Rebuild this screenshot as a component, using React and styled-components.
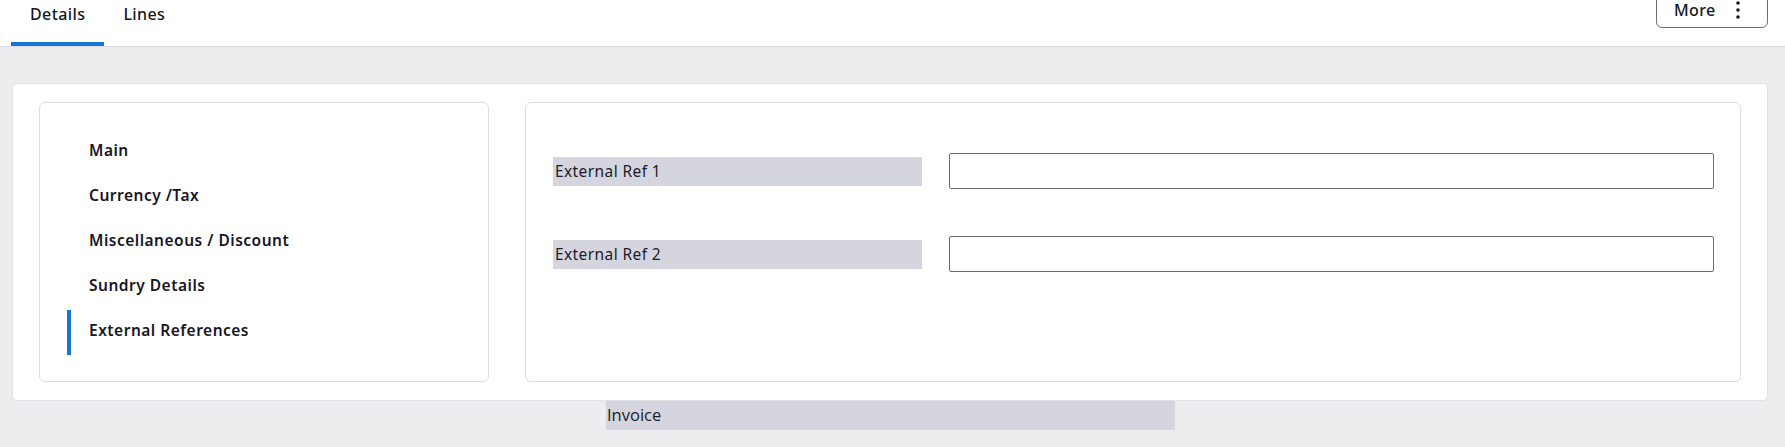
import React from "react";
import styled, { createGlobalStyle } from "styled-components";

const GlobalStyle = createGlobalStyle`
  html, body {
    margin: 0;
    padding: 0;
    background: #ededf0;
    font-family: "Noto Sans", "Open Sans", sans-serif;
    color: #1c1c28;
    overflow: hidden;
  }
`;

const Page = styled.div`
  width: 1785px;
  height: 447px;
  background: #ededf0;
`;

const TopBar = styled.div`
  display: flex;
  justify-content: space-between;
  align-items: flex-start;
  height: 46px;
  padding-left: 11px;
  padding-right: 17px;
  background: #ffffff;
  border-bottom: 1px solid #d8d8de;
`;

const Tabs = styled.div`
  display: flex;
`;

const Tab = styled.div`
  box-sizing: border-box;
  height: 46px;
  padding: 3px 19px 0;
  font-size: 16px;
  font-weight: 500;
  letter-spacing: 0.4px;
  line-height: 22px;
  color: #16161f;
  border-bottom: 4px solid ${(p) => (p.active ? "#1a74d2" : "transparent")};
`;

const MoreButton = styled.button`
  display: flex;
  align-items: center;
  gap: 20px;
  box-sizing: border-box;
  height: 36px;
  width: 112px;
  margin-top: -8px;
  padding: 0 0 0 17px;
  background: #ffffff;
  border: 1px solid #6b6b7b;
  border-radius: 6px;
  font-family: "Noto Sans", sans-serif;
  font-size: 16px;
  font-weight: 500;
  letter-spacing: 0.4px;
  color: #16161f;
`;

const Body = styled.div`
  padding: 36px 17px 0 12px;
`;

const Card = styled.div`
  display: flex;
  gap: 36px;
  padding: 18px 26px 18px 26px;
  background: #ffffff;
  border: 1px solid #e2e2e6;
  border-radius: 5px;
`;

const Panel = styled.div`
  box-sizing: border-box;
  height: 280px;
  border: 1px solid #dcdce1;
  border-radius: 6px;
  background: #ffffff;
`;

const NavPanel = styled(Panel)`
  width: 450px;
  flex-shrink: 0;
  padding: 27px 0 0 27px;
`;

const FormPanel = styled(Panel)`
  flex: 1;
  padding: 50px 26px 0 27px;
  display: flex;
  flex-direction: column;
  gap: 47px;
`;

const NavItem = styled.div`
  box-sizing: border-box;
  display: flex;
  align-items: center;
  height: 45px;
  padding-left: 18px;
  padding-bottom: 5px;
  border-left: 4px solid ${(p) => (p.active ? "#1a74d2" : "transparent")};
  font-size: 15.5px;
  font-weight: 600;
  letter-spacing: 0.5px;
  color: #16161f;
`;

const Row = styled.div`
  display: grid;
  grid-template-columns: 369px 1fr;
  column-gap: 27px;
  align-items: center;
`;

const Label = styled.div`
  height: 29px;
  line-height: 29px;
  padding-left: 2px;
  background: #d5d5df;
  font-size: 15.5px;
  letter-spacing: 0.4px;
  color: #1c1c28;
`;

const Input = styled.input`
  box-sizing: border-box;
  height: 36px;
  width: 100%;
  border: 1px solid #6b6b7b;
  border-radius: 2px;
  background: #ffffff;
`;

const Footer = styled.div`
  padding-left: 594px;
`;

const FooterLabel = styled(Label)`
  width: 568px;
  padding-left: 1px;
  line-height: 27px;
  font-size: 16.5px;
  letter-spacing: 0;
  font-family: "Open Sans", sans-serif;
`;

const DotsIcon = () => (
  <svg width="4" height="18" viewBox="0 0 4 18">
    <circle cx="2" cy="2" r="1.8" fill="#16161f" />
    <circle cx="2" cy="9" r="1.8" fill="#16161f" />
    <circle cx="2" cy="16" r="1.8" fill="#16161f" />
  </svg>
);

const NAV = [
  "Main",
  "Currency /Tax",
  "Miscellaneous / Discount",
  "Sundry Details",
  "External References",
];

const App = () => {
  return (
    <Page>
      <GlobalStyle />
      <TopBar>
        <Tabs>
          <Tab active>Details</Tab>
          <Tab>Lines</Tab>
        </Tabs>
        <MoreButton>
          More <DotsIcon />
        </MoreButton>
      </TopBar>
      <Body>
        <Card>
          <NavPanel>
            {NAV.map((item, index) => (
              <NavItem key={index} active={index === NAV.length - 1}>
                {item}
              </NavItem>
            ))}
          </NavPanel>
          <FormPanel>
            <Row>
              <Label>External Ref 1</Label>
              <Input />
            </Row>
            <Row>
              <Label>External Ref 2</Label>
              <Input />
            </Row>
          </FormPanel>
        </Card>
        <Footer>
          <FooterLabel>Invoice</FooterLabel>
        </Footer>
      </Body>
    </Page>
  );
};

export default App;
